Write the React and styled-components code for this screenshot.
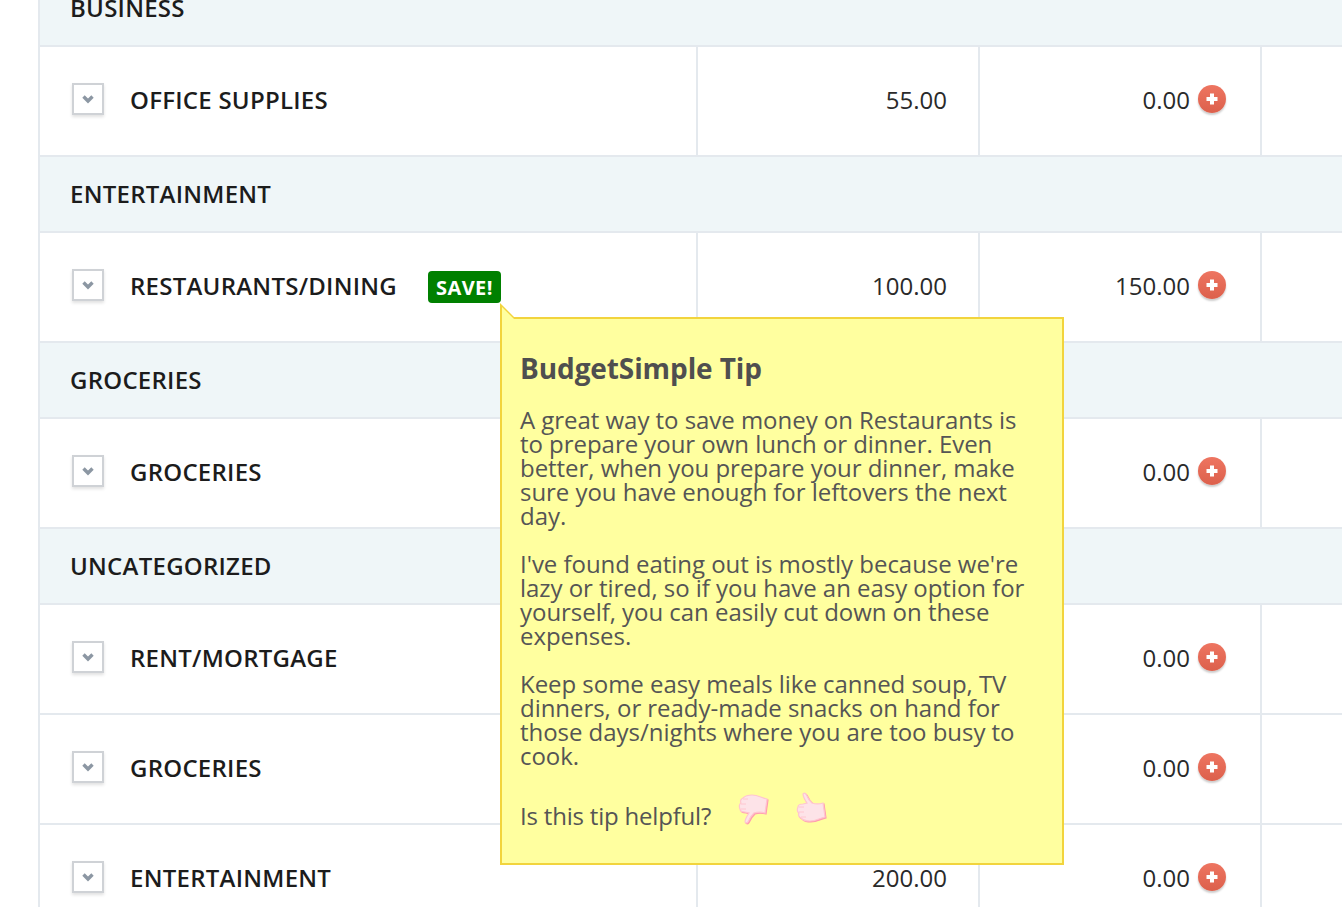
import React from 'react';
import styled, { createGlobalStyle } from 'styled-components';

const GlobalStyle = createGlobalStyle`
  html, body {
    margin: 0;
    height: 907px;
    overflow: hidden;
    background: #fff;
    font-family: "Open Sans", "Liberation Sans", sans-serif;
  }
`;

const Page = styled.div`
  position: relative;
  height: 907px;
  padding-left: 38px;
  overflow: hidden;
`;

const Table = styled.div`
  margin-top: -29px;
  border-left: 2px solid #e4e9ee;
`;

const GroupRow = styled.div`
  height: 72px;
  padding: 0 0 2px 30px;
  display: flex;
  align-items: center;
  background: #eff6f8;
  border-bottom: 2px solid #e4e9ee;
  font-size: 24px;
  font-weight: 600;
  letter-spacing: 0.25px;
  color: #1c1c1c;
`;

const ItemRow = styled.div`
  height: 108px;
  display: grid;
  grid-template-columns: 656px 282px 282px 1fr;
  border-bottom: 2px solid #e4e9ee;
  background: #fff;
`;

const NameCell = styled.div`
  display: flex;
  align-items: center;
  padding: 0 0 4px 32px;
  font-size: 24px;
  font-weight: 600;
  letter-spacing: 0.25px;
  color: #1c1c1c;
`;

const AmountCell = styled.div`
  display: flex;
  align-items: center;
  justify-content: flex-end;
  padding: 0 ${p => p.$pad}px 4px 0;
  gap: 8px;
  border-left: 2px solid #e4e9ee;
  font-size: 24px;
  color: #2a2a2a;
`;

const EmptyCell = styled.div`
  border-left: 2px solid #e4e9ee;
`;

const Toggle = styled.span`
  width: 28px;
  height: 28px;
  margin-right: 26px;
  display: flex;
  align-items: center;
  justify-content: center;
  background: #fff;
  border: 2px solid #cfd2d6;
  box-shadow: 0 2px 3px rgba(0, 0, 0, 0.12);
`;

const AddButton = styled.span`
  width: 28px;
  height: 28px;
  border-radius: 50%;
  display: flex;
  align-items: center;
  justify-content: center;
  background: linear-gradient(#ee7561, #dc604c);
  box-shadow: 0 2px 2px rgba(0, 0, 0, 0.2);
`;

const SaveBadge = styled.span`
  margin-left: 31px;
  margin-top: 4px;
  height: 32px;
  padding: 0 8px;
  display: flex;
  align-items: center;
  background: #008000;
  border-radius: 4px;
  color: #fff;
  font-size: 20px;
  font-weight: 700;
  letter-spacing: 0.4px;
`;

const Tip = styled.div`
  position: absolute;
  left: 500px;
  top: 317px;
  width: 564px;
  height: 548px;
  padding: 0 18px;
  box-sizing: border-box;
  background: #ffff9f;
  border: 2px solid #f2d43d;
  color: #555;
  font-size: 24px;
  line-height: 24px;
  letter-spacing: -0.04px;

  &::before {
    content: '';
    position: absolute;
    left: -2px;
    top: -16px;
    width: 0;
    height: 0;
    border-left: 16px solid #f2d43d;
    border-top: 16px solid transparent;
  }

  &::after {
    content: '';
    position: absolute;
    left: 0;
    top: -12px;
    width: 0;
    height: 0;
    border-left: 12px solid #ffff9f;
    border-top: 12px solid transparent;
  }
`;

const TipTitle = styled.h3`
  margin: 31px 0 22px;
  font-size: 28px;
  line-height: 36px;
  font-weight: 700;
  letter-spacing: -0.1px;
  color: #4f4f4f;
`;

const TipText = styled.p`
  margin: 0 0 24px;
`;

const Helpful = styled.div`
  display: flex;
  align-items: center;
  height: 24px;
  margin-top: 36px;
  letter-spacing: -0.2px;
`;

const Thumb = styled.svg`
  width: 32px;
  height: 32px;
  margin-left: ${p => p.$gap}px;
  margin-top: -16px;
  flex: none;
  filter: drop-shadow(1px 1px 0.6px #ff9db0);
`;

const ChevronIcon = () => (
  <svg width="14" height="10" viewBox="0 0 14 10">
    <path d="M2.5 2.5 L7 7 L11.5 2.5" fill="none" stroke="#8c97a3" strokeWidth="3.4" />
  </svg>
);

const PlusIcon = () => (
  <svg width="14" height="14" viewBox="0 0 14 14">
    <path d="M7 1.5 V12.5 M1.5 7 H12.5" stroke="#fff" strokeWidth="4" />
  </svg>
);

const HAND = 'M7 2 C9 0 10 2 11 4 C12 7 14 9 16 11 C19 12 24 12 27 11 L29 25 C24 26 20 29 14 29 C10 29 7 28 5 26 C3 25 2 23 3 21 C1 20 1 17 2 15 C2 13 4 12 7 12 L11 11 C9 8 7 5 7 2 Z';
const FINGERS = 'M3 15 H8 M3 20 H8 M5 25 H10';

const HandShape = () => (
  <>
    <path d={HAND} fill="#fde3e8" stroke="#ffc6d0" strokeWidth="1.2" />
    <path d={FINGERS} stroke="#ffc6d0" strokeWidth="1" fill="none" />
  </>
);

const ThumbUp = ({ $gap }) => (
  <Thumb $gap={$gap} viewBox="0 0 32 32">
    <HandShape />
  </Thumb>
);

const ThumbDown = ({ $gap }) => (
  <Thumb $gap={$gap} viewBox="0 0 32 32">
    <g transform="translate(0 32) scale(1 -1)">
      <HandShape />
    </g>
  </Thumb>
);

const rows = [
  { group: 'BUSINESS' },
  { name: 'OFFICE SUPPLIES', budget: '55.00', spent: '0.00' },
  { group: 'ENTERTAINMENT' },
  { name: 'RESTAURANTS/DINING', budget: '100.00', spent: '150.00', save: true },
  { group: 'GROCERIES' },
  { name: 'GROCERIES', spent: '0.00' },
  { group: 'UNCATEGORIZED' },
  { name: 'RENT/MORTGAGE', spent: '0.00' },
  { name: 'GROCERIES', spent: '0.00' },
  { name: 'ENTERTAINMENT', budget: '200.00', spent: '0.00' },
];

export default function App() {
  return (
    <Page>
      <GlobalStyle />
      <Table>
        {rows.map((row, i) =>
          row.group ? (
            <GroupRow key={i}>{row.group}</GroupRow>
          ) : (
            <ItemRow key={i}>
              <NameCell>
                <Toggle><ChevronIcon /></Toggle>
                {row.name}
                {row.save && <SaveBadge>SAVE!</SaveBadge>}
              </NameCell>
              <AmountCell $pad={31}>{row.budget}</AmountCell>
              <AmountCell $pad={34}>
                {row.spent}
                <AddButton><PlusIcon /></AddButton>
              </AmountCell>
              <EmptyCell />
            </ItemRow>
          )
        )}
      </Table>
      <Tip>
        <TipTitle>BudgetSimple Tip</TipTitle>
        <TipText>
          A great way to save money on Restaurants is<br />
          to prepare your own lunch or dinner. Even<br />
          better, when you prepare your dinner, make<br />
          sure you have enough for leftovers the next<br />
          day.
        </TipText>
        <TipText>
          I've found eating out is mostly because we're<br />
          lazy or tired, so if you have an easy option for<br />
          yourself, you can easily cut down on these<br />
          expenses.
        </TipText>
        <TipText>
          Keep some easy meals like canned soup, TV<br />
          dinners, or ready-made snacks on hand for<br />
          those days/nights where you are too busy to<br />
          cook.
        </TipText>
        <Helpful>
          Is this tip helpful?
          <ThumbDown $gap={27} />
          <ThumbUp $gap={26} />
        </Helpful>
      </Tip>
    </Page>
  );
}
